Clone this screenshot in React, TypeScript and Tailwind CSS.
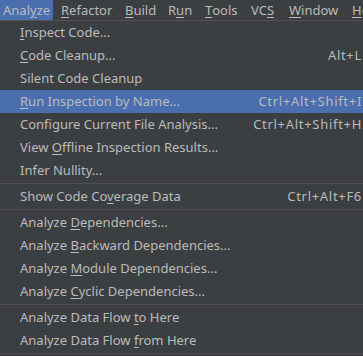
import React from 'react';

type Item = { pre: string; key?: string; post?: string; shortcut?: string; active?: boolean } | 'sep';

const menuBar: { pre: string; key: string; post: string; w: string; active?: boolean }[] = [
    { pre: 'Anal', key: 'y', post: 'ze', w: 'w-[53px] mr-[5px]', active: true },
    { pre: '', key: 'R', post: 'efactor', w: 'w-[64px]' },
    { pre: '', key: 'B', post: 'uild', w: 'w-[43px]' },
    { pre: 'R', key: 'u', post: 'n', w: 'w-[37px]' },
    { pre: '', key: 'T', post: 'ools', w: 'w-[46px]' },
    { pre: 'VC', key: 'S', post: '', w: 'w-[38px]' },
    { pre: '', key: 'W', post: 'indow', w: 'w-[63px]' },
    { pre: '', key: 'H', post: 'elp', w: 'w-[50px]' },
];

const items: Item[] = [
    { pre: '', key: 'I', post: 'nspect Code...' },
    { pre: '', key: 'C', post: 'ode Cleanup...', shortcut: 'Alt+L' },
    { pre: 'Silent Code Cleanup' },
    { pre: '', key: 'R', post: 'un Inspection by Name...', shortcut: 'Ctrl+Alt+Shift+I', active: true },
    { pre: 'Configure Current File Analysis...', shortcut: 'Ctrl+Alt+Shift+H' },
    { pre: 'View ', key: 'O', post: 'ffline Inspection Results...' },
    { pre: 'Infer Nullity...' },
    'sep',
    { pre: 'Show Code Co', key: 'v', post: 'erage Data', shortcut: 'Ctrl+Alt+F6' },
    'sep',
    { pre: 'Analyze ', key: 'D', post: 'ependencies...' },
    { pre: 'Analyze ', key: 'B', post: 'ackward Dependencies...' },
    { pre: 'Analyze ', key: 'M', post: 'odule Dependencies...' },
    { pre: 'Analyze ', key: 'C', post: 'yclic Dependencies...' },
    'sep',
    { pre: 'Analyze Data Flow ', key: 't', post: 'o Here' },
    { pre: 'Analyze Data Flow ', key: 'f', post: 'rom Here' },
    'sep',
];

export default function App() {
    return (
        <div
            className="w-[363px] h-[356px] overflow-hidden bg-[#3c3f41] text-[13px] text-[#bbbbbb]"
            style={{ fontFamily: '"Noto Sans", "Open Sans", sans-serif' }}
        >
            {/* menu bar */}
            <div className="flex h-[20px] whitespace-nowrap">
                {menuBar.map((m, i) => (
                    <div
                        key={i}
                        className={`flex items-center h-full shrink-0 px-[3px] leading-none ${m.w} ${m.active ? 'bg-[#4b6eaf]' : ''}`}
                    >
                        {m.pre}
                        <span className="underline underline-offset-2">{m.key}</span>
                        {m.post}
                    </div>
                ))}
            </div>
            <div className="h-px bg-[#515151]" />

            {/* dropdown */}
            <div className="flex flex-col w-[363px]">
                {items.map((it, i) =>
                    it === 'sep' ? (
                        <div key={i} className="h-[3px] flex flex-col justify-center">
                            <div className="h-px bg-[#515151]" />
                        </div>
                    ) : (
                        <div
                            key={i}
                            className={`flex items-center h-[23px] pl-[20px] pr-px whitespace-nowrap ${it.active ? 'bg-[#4b6eaf]' : ''}`}
                        >
                            <span className="flex-1">
                                {it.pre}
                                {it.key && <span className="underline underline-offset-2">{it.key}</span>}
                                {it.post}
                            </span>
                            {it.shortcut && <span className="text-right tracking-[0.7px]">{it.shortcut}</span>}
                        </div>
                    )
                )}
            </div>
        </div>
    );
}
